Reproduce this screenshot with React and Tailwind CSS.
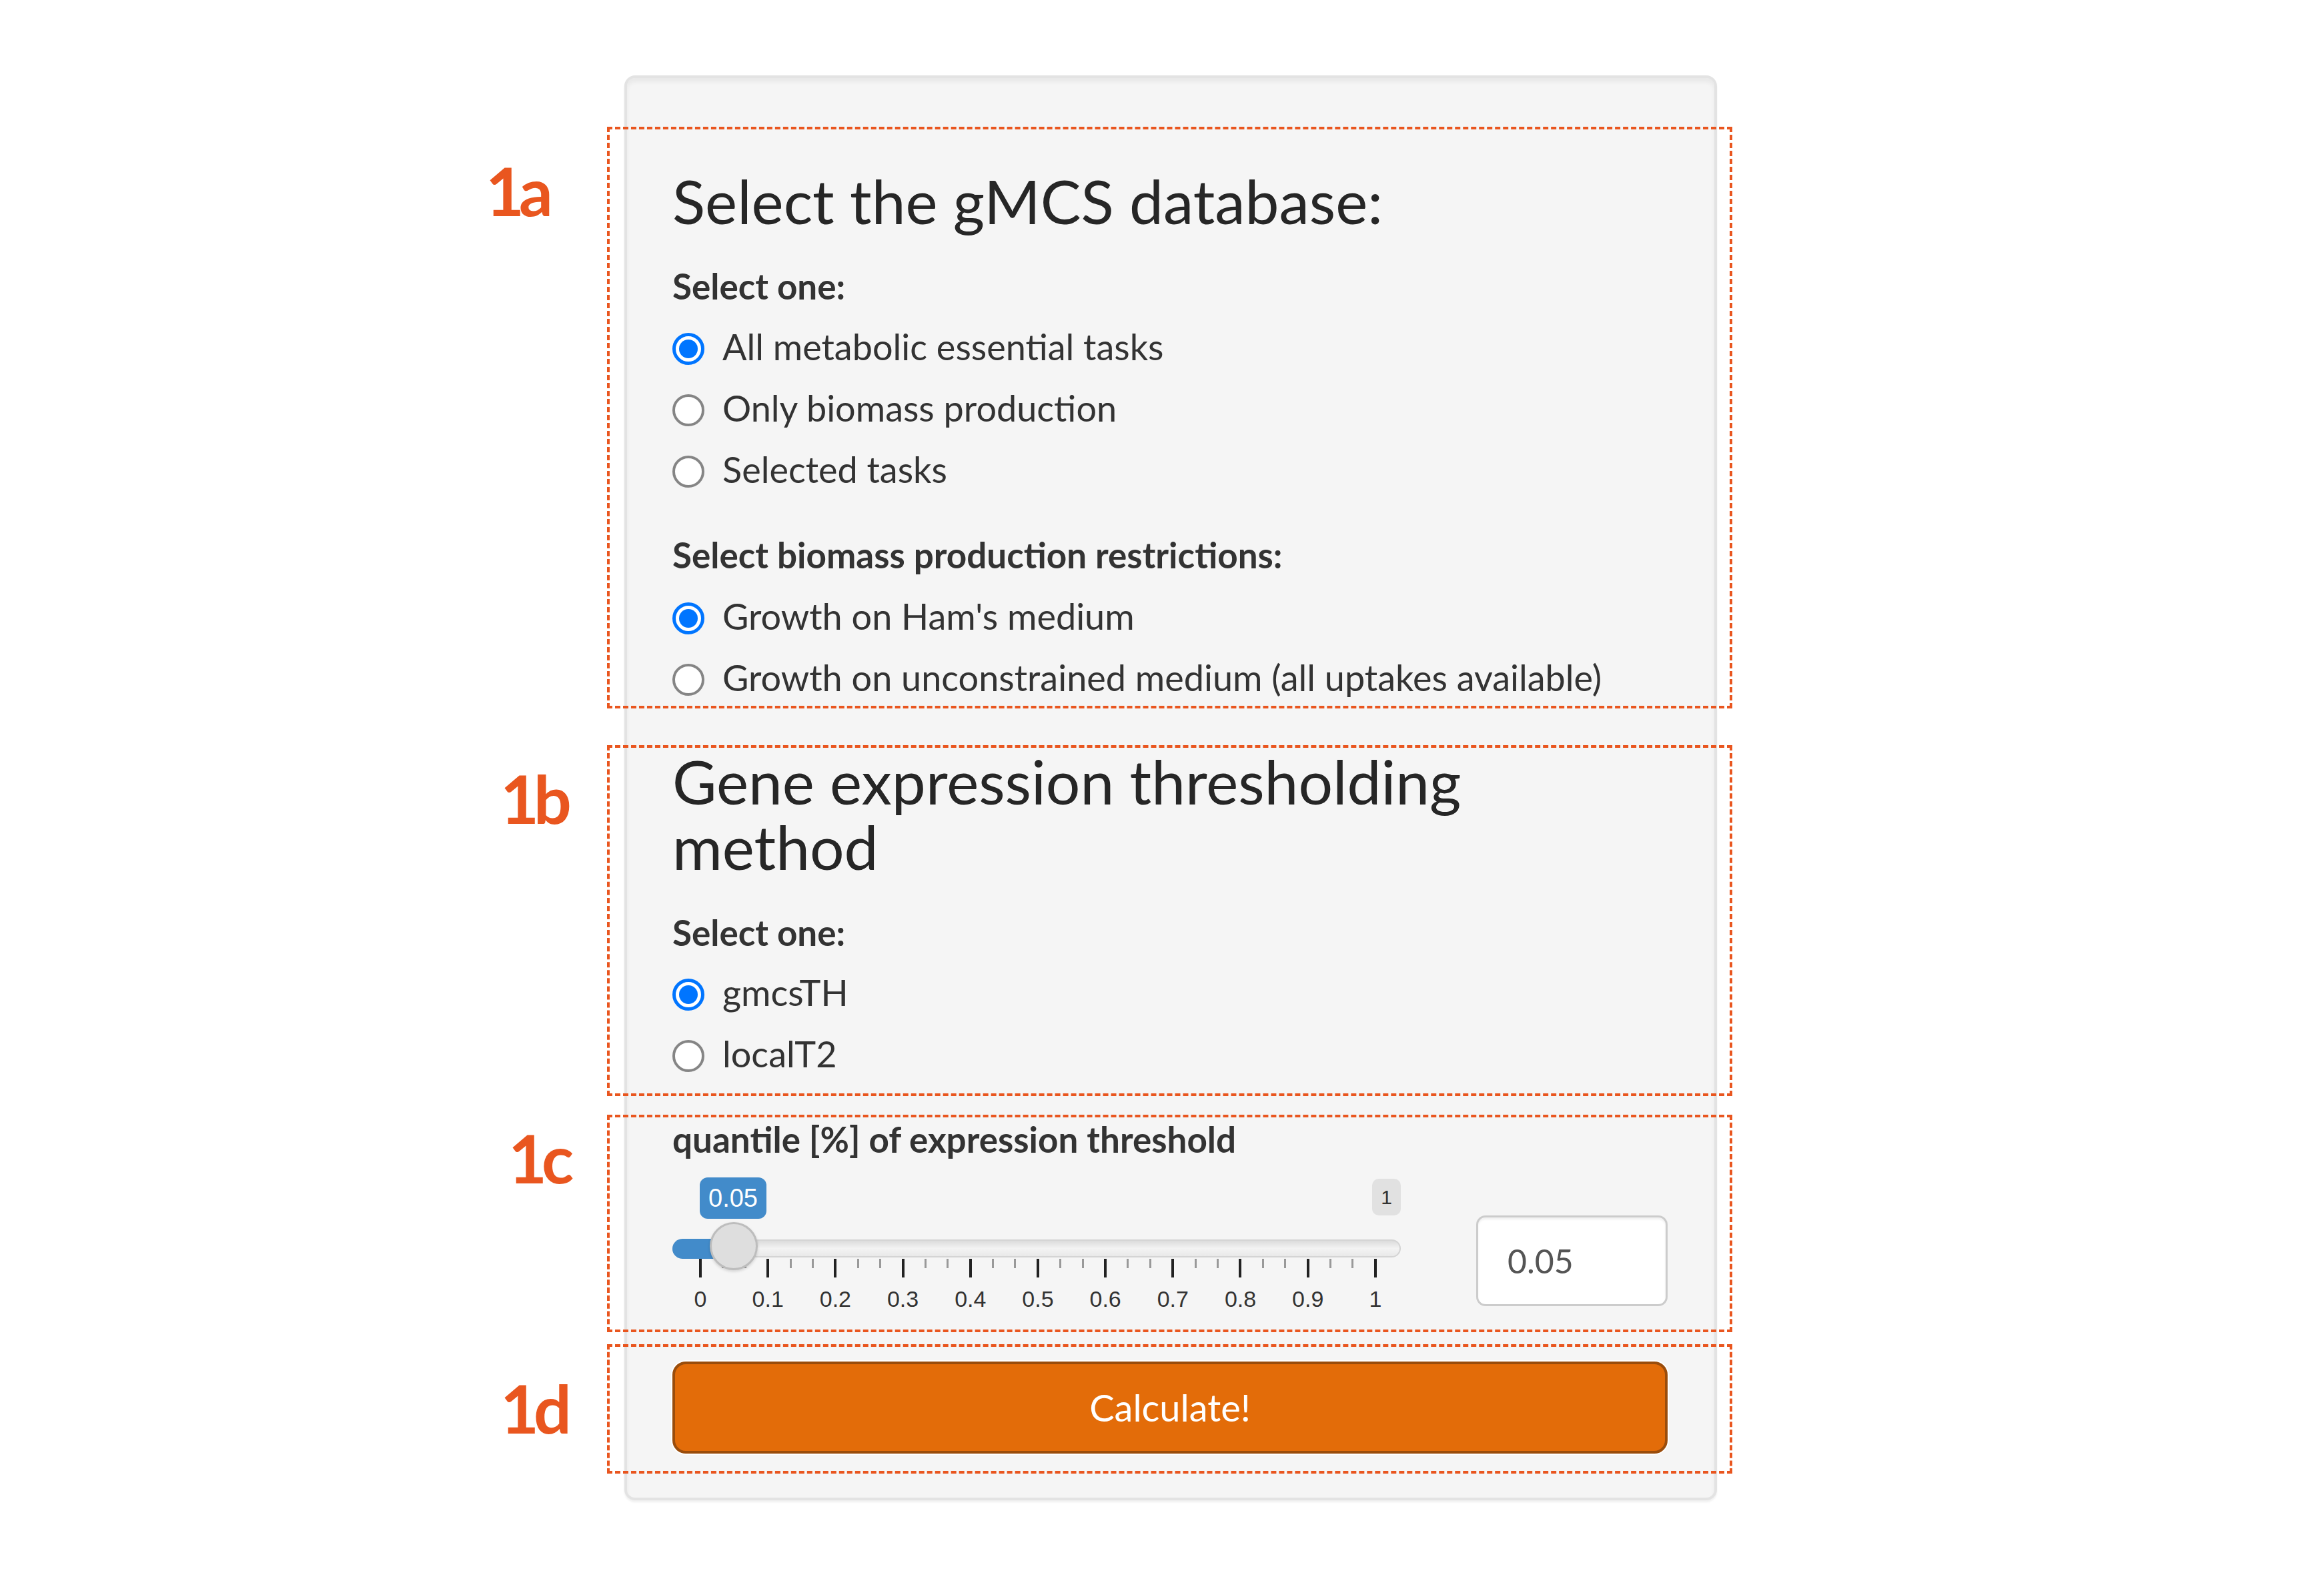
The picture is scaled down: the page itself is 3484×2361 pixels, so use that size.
import React from 'react';

const dbOptions = ['All metabolic essential tasks', 'Only biomass production', 'Selected tasks'];
const mediumOptions = ["Growth on Ham's medium", 'Growth on unconstrained medium (all uptakes available)'];
const methodOptions = ['gmcsTH', 'localT2'];

const tickLabels = ['0', '0.1', '0.2', '0.3', '0.4', '0.5', '0.6', '0.7', '0.8', '0.9', '1'];

// major tick, then two small ones, for every step of the grid
const ticks = tickLabels.flatMap((t, i) => (i < 10 ? [`${t}-M`, `${t}-a`, `${t}-b`] : [`${t}-M`]));

// annotation boxes drawn over the card
const notes = [
  { id: '1a', box: 'top-[190px] h-[872px]', label: 'left-[728px] top-[235px]' },
  { id: '1b', box: 'top-[1117px] h-[526px]', label: 'left-[750px] top-[1146px]' },
  { id: '1c', box: 'top-[1671px] h-[326px]', label: 'left-[762px] top-[1685px]' },
  { id: '1d', box: 'top-[2015px] h-[194px]', label: 'left-[750px] top-[2060px]' },
];

const Radio = ({ checked }) =>
  checked ? (
    <span className="flex h-[48px] w-[48px] shrink-0 items-center justify-center rounded-full border-[5px] border-[#0075ff] bg-white">
      <span className="h-[28px] w-[28px] rounded-full bg-[#0075ff]" />
    </span>
  ) : (
    <span className="h-[48px] w-[48px] shrink-0 rounded-full border-[4px] border-[#858585] bg-white" />
  );

const RadioGroup = ({ options, selected }) => (
  <div className="flex flex-col">
    {options.map((o) => (
      <label key={o} className="flex h-[92px] items-center gap-[27px] text-[54px] leading-[64px] text-[#333]">
        <Radio checked={o === selected} />
        <span className="pb-[6px] whitespace-nowrap">{o}</span>
      </label>
    ))}
  </div>
);

const Slider = () => (
  <div className="flex w-[1092px] flex-col font-['Liberation_Sans',sans-serif]">
    {/* value badges */}
    <div className="flex h-[62px] items-start justify-between">
      <div className="ml-[41px] flex h-[62px] w-[100px] items-center justify-center rounded-[12px] bg-[#428bca] text-[38px] text-white">
        0.05
      </div>
      <div className="mt-[2px] flex h-[55px] w-[43px] items-center justify-center rounded-[10px] bg-[#e1e1e1] text-[30px] text-[#333]">
        1
      </div>
    </div>
    {/* track with fill and handle */}
    <div className="relative mt-[31px] h-[27px]">
      <div className="h-full w-full rounded-full border-[2px] border-[#d4d4d4] bg-gradient-to-b from-[#dcdcdc] via-[#f3f3f3] to-[#e9e9e9]" />
      <div className="absolute -top-[1px] left-0 h-[30px] w-[70px] rounded-l-full bg-[#428bca]" />
      <div className="absolute left-[56px] -top-[26px] h-[72px] w-[72px] rounded-full border-[3px] border-[#bdbdbd] bg-[#dedede] shadow-[0_2px_4px_rgba(0,0,0,0.15)]" />
    </div>
    {/* grid */}
    <div className="mt-[2px] flex items-start justify-between pl-[40px] pr-[36px]">
      {ticks.map((k) =>
        k.endsWith('-M') ? (
          <div key={k} className="h-[28px] w-[4px] bg-[#222]" />
        ) : (
          <div key={k} className="h-[14px] w-[3px] bg-[#999]" />
        )
      )}
    </div>
    <div className="mt-[10px] flex justify-between pl-[42px] pr-[38px]">
      {tickLabels.map((t) => (
        <div key={t} className="flex w-0 justify-center text-[34px] leading-[44px] text-[#333]">
          {t}
        </div>
      ))}
    </div>
  </div>
);

export default function App() {
  return (
    <div className="relative h-[2361px] w-[3484px] overflow-hidden bg-white pl-[936px] pt-[113px] font-['Lato',sans-serif]">
      <div className="w-[1638px] rounded-[16px] border-[4px] border-[#e3e3e3] bg-[#f5f5f5] pb-[66px] pl-[68px] pr-[70px] pt-[135px] shadow-[inset_0_6px_6px_rgba(0,0,0,0.05),0_3px_3px_rgba(0,0,0,0.06)]">
        <h3 className="text-[91px] font-normal leading-[98px] text-[#262626]">Select the gMCS database:</h3>
        <div className="mt-[49px] text-[53px] font-bold leading-[60px] text-[#333]">Select one:</div>
        <div className="mt-[18px]">
          <RadioGroup options={dbOptions} selected={dbOptions[0]} />
        </div>
        <div className="mt-[49px] text-[53px] font-bold leading-[60px] text-[#333]">Select biomass production restrictions:</div>
        <div className="mt-[19px]">
          <RadioGroup options={mediumOptions} selected={mediumOptions[0]} />
        </div>

        <h3 className="mt-[57px] text-[91px] font-normal leading-[98px] text-[#262626]">
          Gene expression thresholding
          <br />
          method
        </h3>
        <div className="mt-[50px] text-[53px] font-bold leading-[60px] text-[#333]">Select one:</div>
        <div className="mt-[17px]">
          <RadioGroup options={methodOptions} selected={methodOptions[0]} />
        </div>

        <div className="mt-[49px] text-[53px] font-bold leading-[60px] text-[#333]">quantile [%] of expression threshold</div>
        <div className="mt-[27px] flex items-start justify-between">
          <Slider />
          <div className="mt-[57px] flex h-[136px] w-[287px] items-center rounded-[14px] border-[3px] border-[#cccccc] bg-white pl-[44px] text-[50px] text-[#555] shadow-[inset_0_3px_3px_rgba(0,0,0,0.06)]">
            0.05
          </div>
        </div>

        <button className="mt-[72px] flex h-[138px] w-full items-center justify-center rounded-[20px] border-[4px] border-[#9a4d0c] bg-[#e36c09] text-[56px] text-white shadow-[0_0_0_2px_#ffffff]">
          Calculate!
        </button>
      </div>

      {notes.map((n) => (
        <React.Fragment key={n.id}>
          <div className={`absolute left-[910px] w-[1687px] border-[4px] border-dashed border-[#e9561f] ${n.box}`} />
          <div className={`absolute text-[100px] font-bold leading-[100px] tracking-[-8px] text-[#e9561f] ${n.label}`}>{n.id}</div>
        </React.Fragment>
      ))}
    </div>
  );
}
